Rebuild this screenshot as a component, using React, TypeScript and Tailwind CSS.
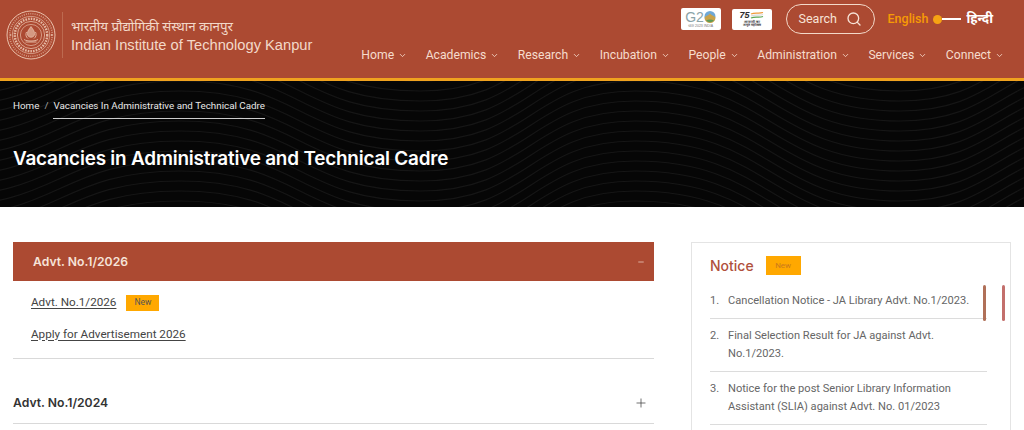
import { ChevronDown, Minus, Plus, Search } from "lucide-react";

const navItems = ["Home", "Academics", "Research", "Incubation", "People", "Administration", "Services", "Connect"];

const notices = [
  { text: ["Cancellation Notice - JA Library Advt. No.1/2023."] },
  { text: ["Final Selection Result for JA against Advt.", "No.1/2023."] },
  { text: ["Notice for the post Senior Library Information", "Assistant (SLIA) against Advt. No. 01/2023"] },
];

const Emblem = () => (
  <svg width="50" height="50" viewBox="0 0 50 50" fill="none" stroke="#efcdb8" className="shrink-0">
    <circle cx="25" cy="25" r="24" strokeWidth="0.9" />
    <circle cx="25" cy="25" r="21.3" strokeWidth="1.6" strokeDasharray="1 1.2" opacity="0.6" />
    <circle cx="25" cy="25" r="18.6" strokeWidth="0.6" />
    <circle cx="25" cy="25" r="16.2" strokeWidth="2.4" strokeDasharray="1.6 1.1" opacity="0.85" />
    <circle cx="25" cy="25" r="13.6" strokeWidth="0.7" />
    <circle cx="25" cy="25" r="10.6" strokeWidth="0.6" />
    <path d="M25 16.5c1.8 2.6 3.6 4.6 3.6 7.2 0 2.4-1.7 3.6-3.6 3.6s-3.6-1.2-3.6-3.6c0-2.6 1.8-4.6 3.6-7.2Z" fill="#efcdb8" fillOpacity="0.6" strokeWidth="0.6" />
    <path d="M18 29.5c3 2 11 2 14 0M19.5 32h11M20.5 22c-1 2-.8 5 1.5 6.5M29.5 22c1 2 .8 5-1.5 6.5" strokeWidth="0.8" />
    <circle cx="4.6" cy="25" r="0.8" fill="#efcdb8" stroke="none" />
    <circle cx="45.4" cy="25" r="0.8" fill="#efcdb8" stroke="none" />
  </svg>
);

const HeroWaves = () => (
  <svg className="absolute inset-0 h-full w-full" viewBox="0 0 1024 126" fill="none" stroke="#161616" strokeWidth="1.2">
    {Array.from({ length: 30 }).map((_, i) => {
      const y = i * 10 - 70;
      return (
        <path
          key={i}
          d={`M-60 ${y + 25} C 60 ${y + 25}, 60 ${y - 30}, 180 ${y - 30} C 300 ${y - 30}, 300 ${y + 30}, 420 ${y + 30} C 530 ${y + 30}, 530 ${y - 40}, 635 ${y - 40} C 770 ${y - 40}, 770 ${y + 40}, 900 ${y + 40} C 1000 ${y + 40}, 1000 ${y - 20}, 1100 ${y - 20}`}
        />
      );
    })}
  </svg>
);

const NewBadge = ({ className }: { className: string }) => (
  <span className={`flex items-center justify-center bg-[#ffa800] ${className}`}>New</span>
);

const G20Logo = () => (
  <div className="flex h-[22px] w-[40px] flex-col items-center justify-center rounded-[2px] bg-white font-['Liberation_Sans',sans-serif] leading-none">
    <div className="flex items-center">
      <span className="text-[14px] leading-[14px] text-[#8aa3a8]">G2</span>
      <svg width="12" height="13" viewBox="0 0 12 13">
        <circle cx="6" cy="6.5" r="5.5" fill="#6fa8d6" />
        <path d="M.5 7.5c2-2 4-2 5.5-4 1.5 2 3.5 2 5.5 4a5.5 5.5 0 0 1-11 0Z" fill="#c9a24a" />
        <path d="M2 10.5c2.5-1.5 5.5-1.5 8 0a5.5 5.5 0 0 1-8 0Z" fill="#5f9a55" />
      </svg>
    </div>
    <span className="mt-[1px] text-[3.5px] text-[#777]">भारत 2023 INDIA</span>
  </div>
);

const AmritLogo = () => (
  <div className="flex h-[21px] w-[40px] flex-col items-center justify-center rounded-[2px] bg-white font-['Liberation_Sans',sans-serif] leading-none">
    <div className="flex h-[10px] items-center">
      <span className="text-[9px] font-bold italic text-[#2d2d2d]">75</span>
      <svg width="14" height="8" viewBox="0 0 14 8" fill="none" strokeWidth="1.3">
        <path d="M1 2c4-2 8 0 12-1.5" stroke="#f09a3a" />
        <path d="M1 4c4-2 8 0 12-1.5" stroke="#d9d9d9" />
        <path d="M1 6c4-2 8 0 12-1.5" stroke="#5aa653" />
      </svg>
    </div>
    <span className="text-[3.5px] font-bold text-[#444]">आज़ादी का</span>
    <span className="text-[3.5px] font-bold text-[#444]">अमृत महोत्सव</span>
  </div>
);

export default function App() {
  return (
    <div className="h-[430px] w-[1024px] overflow-hidden bg-white font-['Roboto',sans-serif]">
      <header className="flex h-[81px] justify-between border-b-[3px] border-[#f0a21f] bg-[#ac4a32] pl-[6px] pr-[20px]">
        <div className="flex items-start pt-[10px]">
          <Emblem />
          <div className="ml-[6px] mt-[2px] h-[46px] border-l border-[#bd6a50] pl-[8px] text-[#f3d9c9]">
            <div className="mt-[5px] font-['Noto_Sans','Noto_Sans_Devanagari','DejaVu_Sans',sans-serif] text-[13.3px] leading-[19px]">भारतीय प्रौद्योगिकी संस्थान कानपुर</div>
            <div className="font-['Liberation_Sans',sans-serif] text-[14.7px] leading-[18px]">Indian Institute of Technology Kanpur</div>
          </div>
        </div>

        <div className="flex flex-col items-end">
          <div className="mr-[11px] mt-[4px] flex h-[30px] items-center">
            <G20Logo />
            <div className="ml-[11px]">
              <AmritLogo />
            </div>
            <div className="ml-[14px] flex h-[30px] w-[89px] items-center rounded-full border border-[#f3d9c9] pl-[12px] text-[12.5px] text-[#f7e3d7]">
              Search
              <Search size={16} strokeWidth={2} className="ml-[9px]" />
            </div>
            <span className="ml-[13px] text-[12.5px] font-medium text-[#f79a05]">English</span>
            <span className="ml-[5px] h-[9px] w-[9px] rounded-full bg-[#f6a313]" />
            <span className="h-[1.5px] w-[19px] bg-white" />
            <span className="ml-[5px] font-['Noto_Sans','Noto_Sans_Devanagari','DejaVu_Sans',sans-serif] text-[13px] font-bold text-white">हिन्दी</span>
          </div>
          <nav className="mt-[12px] flex gap-[18.5px] text-[12.2px] leading-[18px] text-[#f6dccd]">
            {navItems.map((item) => (
              <span key={item} className="flex items-center gap-[4px]">
                {item}
                <ChevronDown size={9} strokeWidth={2.2} />
              </span>
            ))}
          </nav>
        </div>
      </header>

      <section className="relative h-[126px] bg-[#060606] px-[13px] text-white">
        <HeroWaves />
        <div className="relative flex pt-[18px] text-[9.8px] leading-[14px] text-[#e8e8e8]">
          <span>Home</span>
          <span className="mx-[5px] text-[#aaa]">/</span>
          <span className="border-b border-[#ccc] pb-[5px]">Vacancies In Administrative and Technical Cadre</span>
        </div>
        <h1 className="relative mt-[27px] font-['Inter',sans-serif] text-[18.9px] font-semibold leading-[26px] tracking-[-0.2px]">
          Vacancies in Administrative and Technical Cadre
        </h1>
      </section>

      <main className="flex justify-between pl-[13px] pr-[13px] pt-[35px]">
        <div className="w-[641px]">
          <div className="flex h-[39px] items-center justify-between bg-[#ac4a32] pl-[20px] pr-[9px] pt-[1px] font-['Inter',sans-serif] text-[12.2px] font-semibold text-[#f6e3d8]">
            Advt. No.1/2026
            <Minus size={8} strokeWidth={2} />
          </div>
          <div className="h-[78px] border-b border-[#d9d9d9] pl-[18px] pt-[13px] text-[11.7px] text-[#444]">
            <div className="flex items-center">
              <span className="underline underline-offset-2">Advt. No.1/2026</span>
              <NewBadge className="ml-[10px] h-[16px] w-[33px] text-[8.5px] text-[#555]" />
            </div>
            <div className="mt-[14px] underline underline-offset-2">Apply for Advertisement 2026</div>
          </div>
          <div className="flex h-[65px] items-center justify-between border-b border-[#d9d9d9] pr-[6px] pt-[24px] font-['Inter',sans-serif] text-[12.2px] font-semibold text-[#333]">
            Advt. No.1/2024
            <Plus size={14} strokeWidth={1.2} />
          </div>
        </div>

        <aside className="relative h-[300px] w-[320px] border border-[#e4e4e4] pl-[18px] pt-[12px]">
          <div className="flex items-center">
            <h2 className="font-['Inter',sans-serif] text-[14px] font-medium text-[#b0503c]">Notice</h2>
            <NewBadge className="ml-[12px] h-[19px] w-[35px] text-[8px] text-[#cc7a1c]" />
          </div>
          <ol className="mt-[8px] w-[277px] text-[11.1px] leading-[18px] text-[#666]">
            {notices.map((n, i) => (
              <li key={i} className="flex gap-[12px] border-b border-[#dcdcdc] py-[8px]">
                <span className="w-[6px] shrink-0">{i + 1}.</span>
                <span>
                  {n.text.map((line) => (
                    <span key={line} className="block whitespace-nowrap">{line}</span>
                  ))}
                </span>
              </li>
            ))}
          </ol>
          <span className="absolute left-[291px] top-[42px] h-[36px] w-[3px] rounded-full bg-[#b07058]" />
          <span className="absolute left-[310px] top-[42px] h-[36px] w-[3px] rounded-full bg-[#c36f6c]" />
        </aside>
      </main>
    </div>
  );
}
